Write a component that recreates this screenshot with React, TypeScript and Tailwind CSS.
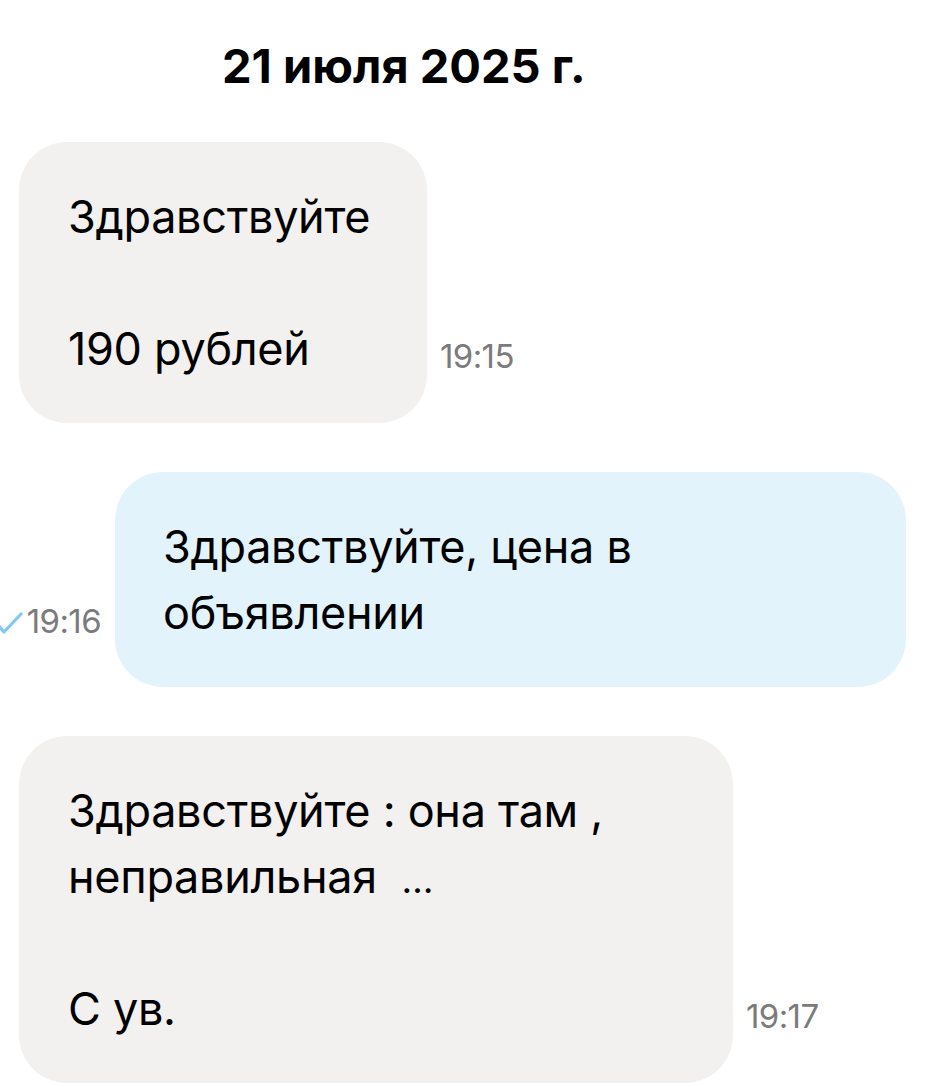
const font = { fontFamily: "Inter, 'Noto Sans', sans-serif" };

function Time({ children }: { children: React.ReactNode }) {
  return (
    <span className="text-[33px] leading-[66px] text-[#7b7b7b] whitespace-nowrap tracking-[-0.6px]">
      {children}
    </span>
  );
}

export default function App() {
  return (
    <div className="w-[943px] h-[1087px] bg-white overflow-hidden text-black" style={font}>
      <div className="pt-[33px] pl-[222px] text-[47px] leading-[66px] font-bold">
        21 июля 2025 г.
      </div>

      <div className="mt-[43px] flex items-end pl-[19px] gap-[13px]">
        <div className="w-[408px] rounded-[48px] bg-[#f2f1f0] pl-[49px] pt-[42px] pb-[41px] text-[45px] leading-[66px] tracking-[-0.3px]">
          Здравствуйте
          <br />
          <br />
          190 рублей
        </div>
        <div className="pb-[34px]">
          <Time>19:15</Time>
        </div>
      </div>

      <div className="mt-[49px] flex items-end justify-end pr-[37px]">
        <div className="pb-[33px] flex items-center">
          <svg width="26" height="24" viewBox="0 0 26 24" className="-ml-[6px] mr-[4px] mt-[4px]">
            <path d="M2 15 L7 21 L24 3" fill="none" stroke="#82c9ef" strokeWidth="3.2" strokeLinecap="round" strokeLinejoin="round" />
          </svg>
          <Time>19:16</Time>
        </div>
        <div className="ml-[14px] w-[791px] rounded-[48px] bg-[#e2f3fc] pl-[48px] pt-[42px] pb-[41px] text-[45px] leading-[66px] tracking-[-0.3px]">
          Здравствуйте, цена в
          <br />
          объявлении
        </div>
      </div>

      <div className="mt-[49px] flex items-end pl-[19px] gap-[13px]">
        <div className="w-[714px] rounded-[48px] bg-[#f2f1f0] pl-[49px] pt-[42px] pb-[41px] text-[45px] leading-[66px] tracking-[-0.3px] whitespace-nowrap">
          Здравствуйте : она там ,
          <br />
          неправильная&nbsp; <span className="text-[37px] leading-none">…</span>
          <br />
          <br />
          С ув.
        </div>
        <div className="pb-[34px]">
          <Time>19:17</Time>
        </div>
      </div>
    </div>
  );
}
